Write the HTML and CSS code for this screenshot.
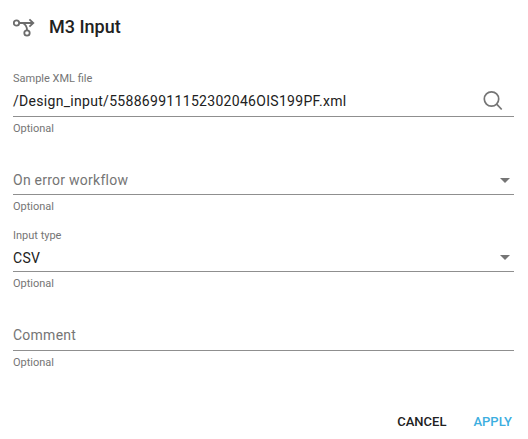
FILE: index.html
```html
<!DOCTYPE html>
<html lang="en">
<head>
    <meta charset="UTF-8">
    <title>M3 Input</title>
    <link rel="stylesheet" href="styles.css">
</head>
<body>
    <div class="dialog">
        <header class="dialog-title">
            <svg class="title-icon" width="24" height="24" viewBox="0 0 24 24" fill="none" stroke="#6b6b6b" stroke-width="1.8">
                <circle cx="3.5" cy="8" r="2.7"/>
                <circle cx="14" cy="18" r="2.7"/>
                <path d="M6.2 8H20M16.4 4.3l3.9 3.7-3.9 3.7M9.5 8c2.5 1 4.5 3.2 4.5 7.3"/>
            </svg>
            <h1>M3 Input</h1>
        </header>

        <div class="field field-first">
            <label>Sample XML file</label>
            <div class="control control-tall">
                <span class="value">/Design_input/558869911152302046OIS199PF.xml</span>
                <svg class="search-icon" width="22" height="22" viewBox="0 0 22 22" fill="none" stroke="#757575" stroke-width="1.7">
                    <circle cx="9.5" cy="9" r="7.2"/>
                    <path d="M14.7 14.2l5 5.3"/>
                </svg>
            </div>
            <p class="hint">Optional</p>
        </div>

        <div class="field field-empty">
            <div class="control">
                <span class="placeholder">On error workflow</span>
                <span class="arrow"></span>
            </div>
            <p class="hint">Optional</p>
        </div>

        <div class="field field-select">
            <label>Input type</label>
            <div class="control control-labelled">
                <span class="value">CSV</span>
                <span class="arrow"></span>
            </div>
            <p class="hint">Optional</p>
        </div>

        <div class="field field-comment">
            <div class="control control-comment">
                <span class="placeholder">Comment</span>
            </div>
            <p class="hint">Optional</p>
        </div>

        <footer class="actions">
            <button class="btn">CANCEL</button>
            <button class="btn btn-apply">APPLY</button>
        </footer>
    </div>
</body>
</html>
```

FILE: styles.css
```css
body {
    margin: 0;
    background: white;
    font-family: Roboto, sans-serif;
    color: #212121;
}
.dialog {
    width: 528px;
    height: 439px;
    padding: 0 14px 0 13px;
    box-sizing: border-box;
    overflow: hidden;
}
.dialog-title {
    display: flex;
    align-items: center;
    height: 53px;
}
.title-icon {
    margin-right: 12px;
}
.dialog-title h1 {
    margin: 0;
    font-size: 18px;
    font-weight: 500;
    color: #212121;
}
.field label {
    display: block;
    font-size: 11px;
    line-height: 12px;
    color: #757575;
}
.field-first {
    margin-top: 20px;
}
.field-empty {
    margin-top: 31px;
}
.field-select {
    margin-top: 17px;
}
.field-comment {
    margin-top: 31px;
}
.control {
    display: flex;
    align-items: center;
    justify-content: space-between;
    height: 29px;
    box-sizing: border-box;
    border-bottom: 1px solid #8f8f8f;
}
.control-tall {
    height: 32px;
}
.control-labelled {
    height: 28px;
    margin-top: 2px;
}
.control-comment {
    height: 30px;
    padding-bottom: 1px;
}
.value {
    font-size: 14px;
    letter-spacing: 0.3px;
}
.placeholder {
    font-size: 14px;
    letter-spacing: 0.25px;
    color: #757575;
}
.search-icon {
    margin-right: 10px;
}
.arrow {
    width: 0;
    height: 0;
    margin-right: 4px;
    border-left: 5px solid transparent;
    border-right: 5px solid transparent;
    border-top: 5px solid #757575;
}
.hint {
    margin: 6px 0 0;
    font-size: 11px;
    line-height: 12px;
    color: #757575;
}
.actions {
    display: flex;
    justify-content: flex-end;
    gap: 27px;
    margin-top: 45px;
    padding-right: 2px;
}
.btn {
    padding: 0;
    border: none;
    background: none;
    font-family: Roboto, sans-serif;
    font-size: 13px;
    line-height: 15px;
    font-weight: 500;
    color: #212121;
}
.btn-apply {
    color: #3daee0;
}
```
